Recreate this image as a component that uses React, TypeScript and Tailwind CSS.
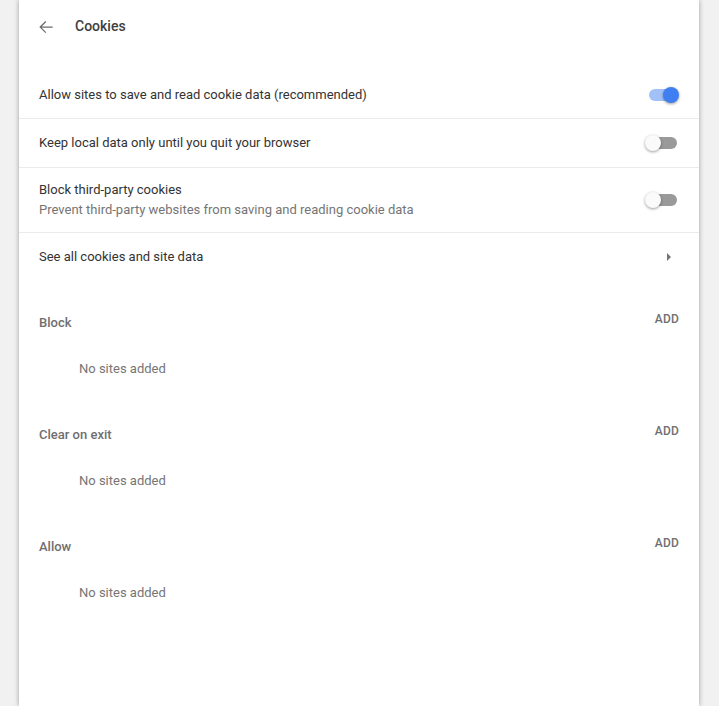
import React from "react";

function Toggle({ on }: { on: boolean }) {
  return (
    <div className="relative w-[34px] h-[16px] shrink-0">
      <div
        className={
          "absolute left-[4px] top-[2px] w-[28px] h-[12px] rounded-full " +
          (on ? "bg-[#a3c1f9]" : "bg-[#9a9a9a]")
        }
      />
      <div
        className={
          "absolute top-0 w-[16px] h-[16px] rounded-full shadow-[0_1px_3px_rgba(0,0,0,0.4)] " +
          (on ? "left-[18px] bg-[#3f7ff2]" : "left-0 bg-[#fafafa]")
        }
      />
    </div>
  );
}

function Section({ title }: { title: string }) {
  return (
    <div className="pt-[18px] pb-[2px]">
      <div className="h-[48px] flex items-center justify-between pl-[20px] pr-[20px]">
        <div className="text-[13px] font-medium text-[#6f6f6f]">{title}</div>
        <div className="text-[12px] font-medium text-[#6f6f6f] mb-[8px] tracking-[0.2px]">ADD</div>
      </div>
      <div className="h-[44px] flex items-center pl-[60px] text-[13px] text-[#757575]">
        No sites added
      </div>
    </div>
  );
}

export default function App() {
  return (
    <div
      className="w-[719px] h-[706px] bg-[#f1f1f1] overflow-hidden"
      style={{ fontFamily: "Roboto, 'Noto Sans', sans-serif" }}
    >
      <div className="ml-[19px] w-[680px] h-[706px] bg-white shadow-[0_0_5px_rgba(0,0,0,0.35)]">
        <div className="h-[53px] flex items-center pl-[17px]">
          <svg width="20" height="20" viewBox="0 0 24 24" className="shrink-0">
            <path
              d="M20 11.25H6.9l5.4-5.4-1.05-1.05L4 12l7.25 7.2 1.05-1.05-5.4-5.4H20z"
              fill="#6b6b6b"
            />
          </svg>
          <div className="ml-[19px] text-[14px] font-medium text-[#404040]">Cookies</div>
        </div>
        <div className="mt-[18px]">
          <div className="h-[48px] flex items-center justify-between pl-[20px] pr-[20px] border-b border-[#ebebeb]">
            <div className="text-[13px] text-[#333333]">
              Allow sites to save and read cookie data (recommended)
            </div>
            <Toggle on={true} />
          </div>
          <div className="h-[49px] flex items-center justify-between pl-[20px] pr-[20px] border-b border-[#ebebeb]">
            <div className="text-[13px] text-[#333333]">
              Keep local data only until you quit your browser
            </div>
            <Toggle on={false} />
          </div>
          <div className="h-[65px] flex items-center justify-between pl-[20px] pr-[20px] border-b border-[#ebebeb]">
            <div className="flex flex-col">
              <div className="text-[13px] leading-[20px] text-[#333333]">Block third-party cookies</div>
              <div className="text-[13px] leading-[20px] text-[#757575]">
                Prevent third-party websites from saving and reading cookie data
              </div>
            </div>
            <Toggle on={false} />
          </div>
          <div className="h-[48px] flex items-center justify-between pl-[20px] pr-[28px]">
            <div className="text-[13px] text-[#333333]">See all cookies and site data</div>
            <svg width="4" height="8" viewBox="0 0 4 8">
              <polygon points="0,0 4,4 0,8" fill="#757575" />
            </svg>
          </div>
          <Section title="Block" />
          <Section title="Clear on exit" />
          <Section title="Allow" />
        </div>
      </div>
    </div>
  );
}
